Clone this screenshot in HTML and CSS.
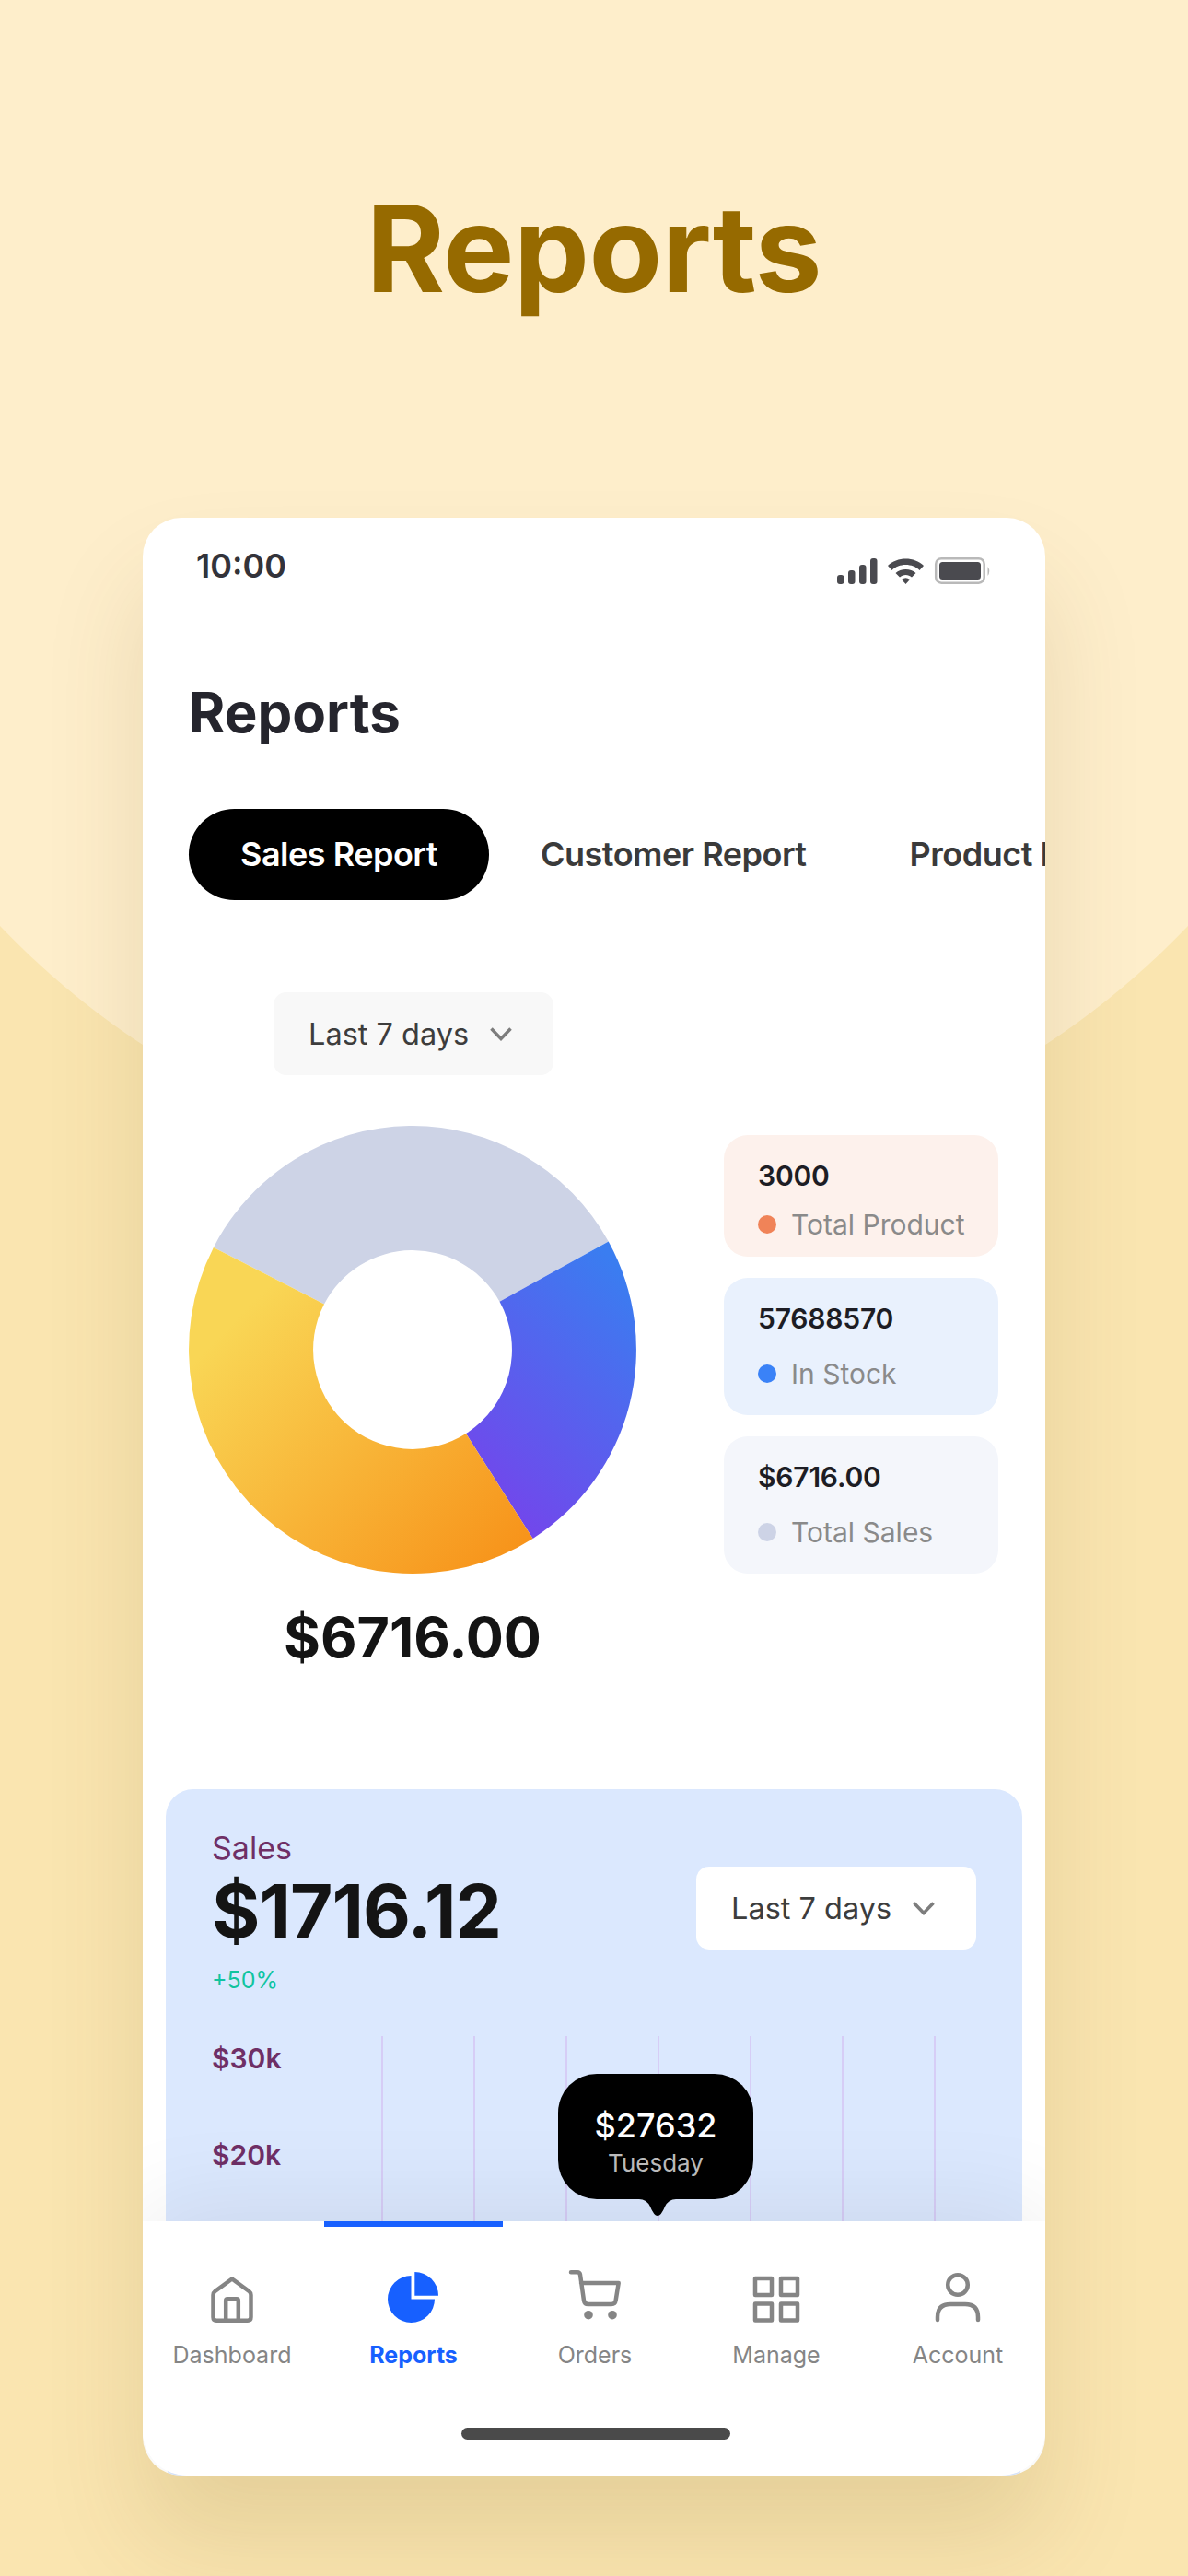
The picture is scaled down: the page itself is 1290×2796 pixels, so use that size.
FILE: index.html
```html
<!DOCTYPE html>
<html lang="en">
<head>
  <meta charset="UTF-8" />
  <meta name="viewport" content="width=device-width, initial-scale=1.0"/>
  <title>Reports</title>
  <link rel="stylesheet" href="styles.css">
</head>
<body>

  <h1 class="hero-title">Reports</h1>

  <div class="phone">
    <div class="status-bar">
      <span class="time">10:00</span>
      <svg class="status-icons" width="168" height="30" viewBox="0 0 168 30">
        <rect x="1" y="20" width="7.500" height="10" rx="3" fill="#4a4a4f"/>
        <rect x="13" y="15" width="7.500" height="15" rx="3" fill="#4a4a4f"/>
        <rect x="25" y="9" width="7.500" height="21" rx="3" fill="#4a4a4f"/>
        <rect x="37" y="2" width="7.500" height="28" rx="3" fill="#4a4a4f"/>
        <path d="M56 10 C 66 0, 85 0, 95 10 L 90.500 15 C 83 7, 68 7, 60.500 15 Z" fill="#4a4a4f"/>
        <path d="M64.500 18 C 70 12.500, 81 12.500, 86.500 18 L 82 22.500 C 78.500 19, 72.500 19, 69 22.500 Z" fill="#4a4a4f"/>
        <path d="M71 25 Q 75.500 21.500 80 25 L 75.500 30 Z" fill="#4a4a4f"/>
        <rect x="108.200" y="2.200" width="52.500" height="26.500" rx="6" fill="none" stroke="#b9b9b9" stroke-width="2.500"/>
        <rect x="112" y="6" width="45" height="19" rx="3.500" fill="#4a4a4f"/>
        <path d="M164.500 11 Q 168 16 164.500 21 Z" fill="#b9b9b9"/>
      </svg>
    </div>

    <h2 class="page-title">Reports</h2>

    <div class="tabs">
      <span class="tab active">Sales Report</span>
      <span class="tab">Customer Report</span>
      <span class="tab">Product Report</span>
    </div>

    <div class="overview">
      <div class="overview-left">
        <div class="dropdown grey">
          Last 7 days
          <svg class="chevron" width="24" height="15" viewBox="0 0 24 15"><path d="M1.500 1.500 L12 12.500 L22.500 1.500" fill="none" stroke="#7d7d7d" stroke-width="3.500"/></svg>
        </div>
        <svg class="donut" width="486" height="486" viewBox="0 0 486 486">
          <defs>
            <linearGradient id="blueGrad" x1="0.75" y1="0" x2="0.2" y2="1">
              <stop offset="0" stop-color="#3a7df0"/>
              <stop offset="1" stop-color="#7742eb"/>
            </linearGradient>
            <linearGradient id="orangeGrad" x1="0" y1="0.15" x2="0.9" y2="1">
              <stop offset="0.12" stop-color="#f9d655"/>
              <stop offset="1" stop-color="#f7931a"/>
            </linearGradient>
          </defs>
          <path d="M26.900 131.900 A 243 243 0 0 1 455.700 125.600 L 337.500 190.800 A 108 108 0 0 0 147 193.600 Z" fill="#cdd3e6"/>
          <path d="M455.700 125.600 A 243 243 0 0 1 373.600 447.900 L 301 334.100 A 108 108 0 0 0 337.500 190.800 Z" fill="url(#blueGrad)"/>
          <path d="M373.600 447.900 A 243 243 0 0 1 26.900 131.900 L 147 193.600 A 108 108 0 0 0 301 334.100 Z" fill="url(#orangeGrad)"/>
        </svg>
        <div class="donut-total">$6716.00</div>
      </div>

      <div class="legend">
        <div class="legend-card peach">
          <div class="legend-value">3000</div>
          <div class="legend-label"><i class="dot dot-orange"></i>Total Product</div>
        </div>
        <div class="legend-card sky">
          <div class="legend-value">57688570</div>
          <div class="legend-label"><i class="dot dot-blue"></i>In Stock</div>
        </div>
        <div class="legend-card mist">
          <div class="legend-value">$6716.00</div>
          <div class="legend-label"><i class="dot dot-grey"></i>Total Sales</div>
        </div>
      </div>
    </div>

    <div class="sales-card">
      <div class="sales-head">
        <div>
          <div class="sales-label">Sales</div>
          <div class="sales-amount">$1716.12</div>
          <div class="sales-change">+50%</div>
        </div>
        <div class="dropdown white">
          Last 7 days
          <svg class="chevron" width="24" height="15" viewBox="0 0 24 15"><path d="M1.500 1.500 L12 12.500 L22.500 1.500" fill="none" stroke="#7d7d7d" stroke-width="3.500"/></svg>
        </div>
      </div>

      <div class="chart">
        <div class="chart-axis">
          <span>$30k</span>
          <span>$20k</span>
        </div>
        <div class="chart-lines">
          <i></i><i></i><i></i><i></i><i></i><i></i><i></i>
        </div>
        <div class="chart-tip">
          <strong>$27632</strong>
          <span>Tuesday</span>
        </div>
      </div>
    </div>

    <nav class="bottom-nav">
      <div class="nav-items">
        <a class="nav-item">
          <svg width="56" height="56" viewBox="0 0 56 56"><path d="M28 7.500 L46.500 21 Q48.500 22.500 48.500 25 V49 Q48.500 52.700 45 52.700 H11 Q7.500 52.700 7.500 49 V25 Q7.500 22.500 9.500 21 Z M21.200 52.700 V31 Q21.200 29.200 23 29.200 H33 Q34.800 29.200 34.800 31 V52.700" fill="none" stroke="#858585" stroke-width="4.500" stroke-linejoin="round"/></svg>
          <span>Dashboard</span>
        </a>
        <a class="nav-item active">
          <svg width="56" height="56" viewBox="0 0 56 56"><path d="M25.500 4 A 25.500 25.500 0 1 0 51 29.500 H25.500 Z" fill="#1760ff"/><path d="M29.300 0 A 25.700 25.700 0 0 1 55 25.700 H29.300 Z" fill="#1760ff"/></svg>
          <span>Reports</span>
        </a>
        <a class="nav-item">
          <svg width="56" height="56" viewBox="0 0 56 56"><path d="M2 0.300 H9 Q11.500 0.300 12 3 L16 31 Q16.700 35 20.500 35 H46 Q50 35 50.600 31 L53.700 12 H13" fill="none" stroke="#858585" stroke-width="4.500" stroke-linecap="round" stroke-linejoin="round"/><circle cx="21" cy="46.700" r="4.800" fill="#858585"/><circle cx="47" cy="46.700" r="4.800" fill="#858585"/></svg>
          <span>Orders</span>
        </a>
        <a class="nav-item">
          <svg width="56" height="56" viewBox="0 0 56 56"><g fill="none" stroke="#858585" stroke-width="4.500" stroke-linejoin="round"><rect x="5" y="7" width="18" height="18"/><rect x="33" y="7" width="18" height="18"/><rect x="5" y="34.500" width="18" height="18"/><rect x="33" y="34.500" width="18" height="18"/></g></svg>
          <span>Manage</span>
        </a>
        <a class="nav-item">
          <svg width="56" height="56" viewBox="0 0 56 56"><circle cx="28" cy="14" r="10.800" fill="none" stroke="#858585" stroke-width="4.500"/><path d="M6 52 V49 Q6 35 20 35 H36 Q50 35 50 49 V52" fill="none" stroke="#858585" stroke-width="4.500" stroke-linecap="round"/></svg>
          <span>Account</span>
        </a>
      </div>
      <div class="home-bar"></div>
    </nav>
  </div>

</body>
</html>
```

FILE: styles.css
```css
* {
  box-sizing: border-box;
}

html, body {
  margin: 0;
  height: 100%;
}

/* big pale circle behind the heading is part of the page background */
body {
  font-family: 'Inter', sans-serif;
  background: radial-gradient(circle 893px at 645px 388px, #feeecb 99.9%, #fae5b0 100%);
  display: flex;
  flex-direction: column;
  align-items: center;
  overflow: hidden;
}

.hero-title {
  margin: 195px 0 0;
  font-size: 130px;
  line-height: 150px;
  font-weight: 700;
  letter-spacing: -0.5px;
  color: #966a00;
}

.phone {
  position: relative;
  width: 980px;
  height: 2125px;
  margin-top: 217px;
  background: #fff;
  border-radius: 42px;
  overflow: hidden;
  box-shadow: 0 70px 110px rgba(90, 70, 0, 0.13);
  flex-shrink: 0;
}

.status-bar {
  display: flex;
  justify-content: space-between;
  align-items: center;
  padding: 32px 59px 0 58px;
  height: 72px;
}

.time {
  font-size: 36px;
  font-weight: 600;
  color: #33333a;
}

.status-icons {
  margin-top: 10px;
}

.page-title {
  margin: 103px 0 0 50px;
  font-size: 60px;
  line-height: 72px;
  font-weight: 700;
  color: #25252d;
}

.tabs {
  display: flex;
  align-items: center;
  margin: 69px 0 0 50px;
  white-space: nowrap;
}

.tab {
  font-size: 36px;
  font-weight: 600;
  letter-spacing: -0.5px;
  color: #3a3a3a;
  padding: 0 56px;
  line-height: 99px;
}

.tab.active {
  background: #000;
  color: #fff;
  border-radius: 50px;
}

.overview {
  display: flex;
  justify-content: space-between;
  margin-top: 100px;
  padding: 0 51px 0 50px;
}

.overview-left {
  display: flex;
  flex-direction: column;
  align-items: center;
  width: 486px;
}

.dropdown {
  display: flex;
  align-items: center;
  justify-content: space-between;
  width: 304px;
  height: 90px;
  padding: 0 45px 0 38px;
  border-radius: 14px;
  font-size: 32.5px;
  color: #3d3d3d;
}

.dropdown.grey {
  background: #f8f8f8;
  margin-left: 2px;
}

.dropdown.white {
  background: #fff;
  margin-top: 41px;
}

.donut {
  display: block;
  margin-top: 55px;
}

.donut-total {
  margin-top: 30px;
  font-size: 61px;
  line-height: 78px;
  font-weight: 700;
  color: #141414;
}

.legend {
  display: flex;
  flex-direction: column;
  gap: 23px;
  width: 298px;
  margin-top: 155px;
}

.legend-card {
  padding: 26px 0 0 37px;
  border-radius: 26px;
  height: 149px;
  white-space: nowrap;
}

.legend-card.peach {
  background: #fdf1ec;
  height: 132px;
}

.legend-card.sky {
  background: #e9f1fd;
}

.legend-card.mist {
  background: #f4f6fb;
}

.legend-value {
  font-size: 30px;
  line-height: 36px;
  font-weight: 600;
  letter-spacing: -0.2px;
  color: #1d1d24;
}

.legend-label {
  display: flex;
  align-items: center;
  margin-top: 24px;
  font-size: 30px;
  line-height: 36px;
  color: #8a8a8a;
}

.peach .legend-label {
  margin-top: 17px;
}

.dot {
  width: 20px;
  height: 20px;
  border-radius: 50%;
  margin-right: 16px;
}

.dot-orange { background: #f08358; }
.dot-blue { background: #3a82f7; }
.dot-grey { background: #cdd3e6; }

.sales-card {
  position: relative;
  margin: 126px 25px 0;
  height: 760px;
  padding: 43px 50px 0;
  background: #dbe8fe;
  border-radius: 30px;
}

.sales-head {
  display: flex;
  justify-content: space-between;
  align-items: flex-start;
}

.sales-label {
  font-size: 34px;
  line-height: 42px;
  color: #6f2f66;
}

.sales-amount {
  margin-top: 2px;
  font-size: 80px;
  line-height: 90px;
  font-weight: 700;
  letter-spacing: -1px;
  color: #141414;
}

.sales-change {
  margin-top: 15px;
  font-size: 25px;
  line-height: 30px;
  color: #10c4a0;
}

.chart {
  position: relative;
  margin-top: 46px;
  height: 440px;
}

.chart-axis {
  display: flex;
  flex-direction: column;
  gap: 69px;
  padding-top: 6px;
  font-size: 30px;
  line-height: 36px;
  font-weight: 600;
  color: #6f2f66;
}

.chart-lines {
  position: absolute;
  left: 184px;
  top: 0;
  bottom: 0;
  display: flex;
  gap: 98px;
}

.chart-lines i {
  width: 2px;
  background: #d6cdf6;
}

.chart-tip {
  position: absolute;
  left: 376px;
  top: 41px;
  width: 212px;
  height: 136px;
  padding-top: 10px;
  background: #000;
  border-radius: 42px;
  display: flex;
  flex-direction: column;
  align-items: center;
  justify-content: center;
  gap: 4px;
}

.chart-tip::after {
  content: "";
  position: absolute;
  left: 88px;
  top: 130px;
  width: 40px;
  height: 24px;
  background: #000;
  clip-path: path("M0 6 Q 8 6 12 14 Q 16 24 20 24 Q 24 24 28 14 Q 32 6 40 6 Z");
}

.chart-tip strong {
  font-size: 36px;
  line-height: 44px;
  font-weight: 500;
  color: #fff;
}

.chart-tip span {
  font-size: 26px;
  line-height: 30px;
  color: #bdbdbd;
}

.bottom-nav {
  position: absolute;
  left: 0;
  right: 0;
  bottom: 0;
  height: 276px;
  background: #fff;
  border-radius: 0 0 48px 48px;
  box-shadow: 0 -10px 110px rgba(0, 0, 0, 0.08);
}

.nav-items {
  display: grid;
  grid-template-columns: repeat(5, 197px);
  margin-left: -1.5px;
  padding-top: 55px;
}

.nav-item {
  position: relative;
  display: flex;
  flex-direction: column;
  align-items: center;
  font-size: 25px;
  line-height: 32px;
  color: #858585;
}

.nav-item svg {
  display: block;
  margin-bottom: 18px;
  overflow: visible;
}

.nav-item.active {
  color: #1760ff;
  font-weight: 700;
}

.nav-item.active::before {
  content: "";
  position: absolute;
  top: -55px;
  left: 1.5px;
  right: 1.5px;
  height: 6px;
  background: #1760ff;
}

.home-bar {
  width: 292px;
  height: 13px;
  margin: 63px 0 0 346px;
  border-radius: 7px;
  background: #4a4a4a;
}
```
